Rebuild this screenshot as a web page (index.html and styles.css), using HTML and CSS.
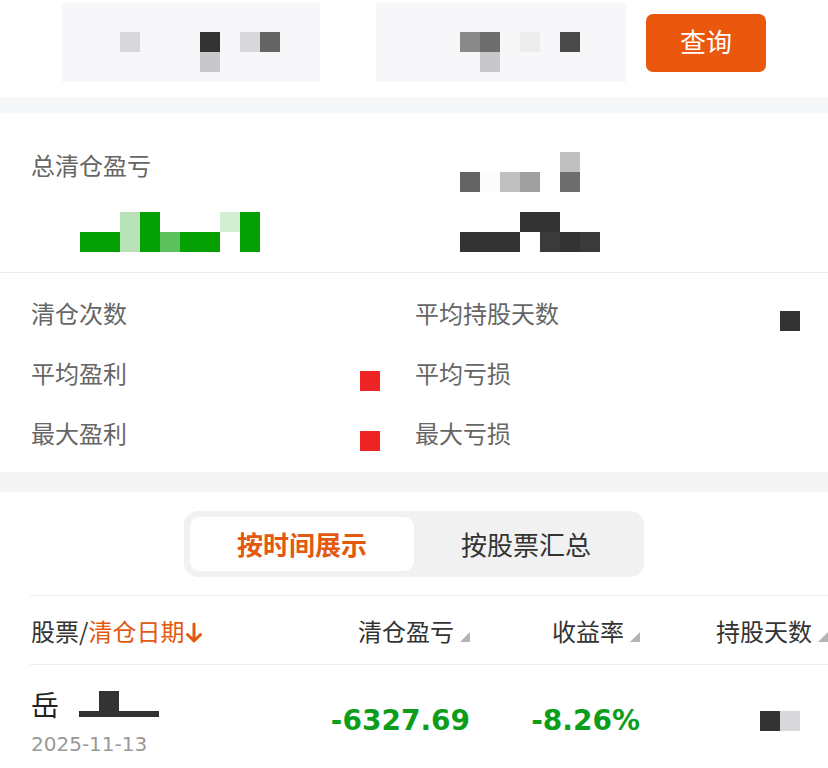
FILE: index.html
```html
<!DOCTYPE html>
<html lang="zh-CN">
<head>
    <meta charset="UTF-8">
    <meta name="viewport" content="width=device-width, initial-scale=1.0">
    <title>清仓盈亏</title>
    <link rel="stylesheet" href="styles.css">
</head>
<body>

    <!-- Search bar: date range + query -->
    <div class="search-bar">
        <div class="field field-start">
            <div class="mosaic">
                <div class="mrow"><span class="px px-grayD"></span><span class="px"></span><span class="px"></span><span class="px"></span><span class="px px-ink"></span><span class="px"></span><span class="px px-grayD"></span><span class="px px-gray6"></span></div>
                <div class="mrow"><span class="px"></span><span class="px"></span><span class="px"></span><span class="px"></span><span class="px px-grayC"></span></div>
            </div>
        </div>
        <div class="field field-end">
            <div class="mosaic">
                <div class="mrow"><span class="px px-gray8"></span><span class="px px-gray7"></span><span class="px"></span><span class="px px-grayE"></span><span class="px"></span><span class="px px-slate"></span></div>
                <div class="mrow"><span class="px"></span><span class="px px-grayC"></span></div>
            </div>
        </div>
        <button class="query-btn">查询</button>
    </div>

    <div class="band"></div>

    <!-- Summary -->
    <section class="summary">
        <div class="total">
            <div class="total-left">
                <div class="total-label">总清仓盈亏</div>
                <div class="mosaic total-value">
                    <div class="mrow"><span class="px"></span><span class="px"></span><span class="px px-green-light"></span><span class="px px-green"></span><span class="px"></span><span class="px"></span><span class="px"></span><span class="px px-green-pale"></span><span class="px px-green"></span></div>
                    <div class="mrow"><span class="px px-green"></span><span class="px px-green"></span><span class="px px-green-light"></span><span class="px px-green"></span><span class="px px-green-mid"></span><span class="px px-green"></span><span class="px px-green"></span><span class="px"></span><span class="px px-green"></span></div>
                </div>
            </div>
            <div class="total-right">
                <div class="mosaic">
                    <div class="mrow"><span class="px"></span><span class="px"></span><span class="px"></span><span class="px"></span><span class="px"></span><span class="px px-grayB"></span></div>
                    <div class="mrow"><span class="px px-gray6"></span><span class="px px-white"></span><span class="px px-grayB"></span><span class="px px-grayA"></span><span class="px"></span><span class="px px-gray7"></span></div>
                    <div class="mrow"></div>
                    <div class="mrow"><span class="px"></span><span class="px"></span><span class="px"></span><span class="px px-ink"></span><span class="px px-ink"></span></div>
                    <div class="mrow"><span class="px px-ink"></span><span class="px px-ink"></span><span class="px px-ink"></span><span class="px"></span><span class="px px-ink2"></span><span class="px px-ink"></span><span class="px px-ink2"></span></div>
                </div>
            </div>
        </div>

        <div class="stats">
            <div class="stat"><span class="stat-label">清仓次数</span></div>
            <div class="stat"><span class="stat-label">平均持股天数</span><span class="px px-ink stat-value"></span></div>
            <div class="stat"><span class="stat-label">平均盈利</span><span class="px px-red stat-value"></span></div>
            <div class="stat"><span class="stat-label">平均亏损</span></div>
            <div class="stat"><span class="stat-label">最大盈利</span><span class="px px-red stat-value"></span></div>
            <div class="stat"><span class="stat-label">最大亏损</span></div>
        </div>
    </section>

    <div class="band band-lg"></div>

    <!-- Records -->
    <section class="records">
        <div class="tabs">
            <div class="tab active">按时间展示</div>
            <div class="tab">按股票汇总</div>
        </div>

        <div class="table">
            <div class="row thead">
                <div class="cell">股票/<span class="accent">清仓日期</span><svg class="sort-arrow" width="16" height="22" viewBox="0 0 16 22"><path d="M8 2 V19 M1.5 12.5 L8 19 L14.5 12.5" fill="none" stroke="#e2590f" stroke-width="3" stroke-linecap="round" stroke-linejoin="round"/></svg></div>
                <div class="cell num">清仓盈亏<svg class="sort-tri" width="10" height="10" viewBox="0 0 10 10"><polygon points="10,0 10,10 0,10" fill="#b4b4b4"/></svg></div>
                <div class="cell num">收益率<svg class="sort-tri" width="10" height="10" viewBox="0 0 10 10"><polygon points="10,0 10,10 0,10" fill="#b4b4b4"/></svg></div>
                <div class="cell days">持股天数<svg class="sort-tri" width="10" height="10" viewBox="0 0 10 10"><polygon points="10,0 10,10 0,10" fill="#b4b4b4"/></svg></div>
            </div>

            <div class="row trow">
                <div class="cell">
                    <div class="stock-name">岳<span class="redact"><span class="redact-block"></span><span class="redact-bar"></span></span></div>
                    <div class="stock-date">2025-11-13</div>
                </div>
                <div class="cell num value loss">-6327.69</div>
                <div class="cell num value loss">-8.26%</div>
                <div class="cell days">
                    <div class="mrow day-value"><span class="px px-ink"></span><span class="px px-grayD"></span></div>
                </div>
            </div>
        </div>
    </section>

</body>
</html>
```

FILE: styles.css
```css
body {
    font-family: "Noto Sans CJK SC", sans-serif;
    background-color: #fff;
    color: #333;
    margin: 0;
    padding: 0;
    overflow-x: hidden;
}

/* pixel mosaic pieces */
.mosaic {
    display: flex;
    flex-direction: column;
}
.mrow {
    display: flex;
    height: 20px;
}
.px {
    display: inline-block;
    width: 20px;
    height: 20px;
    flex-shrink: 0;
}
.px-ink { background-color: #333; }
.px-ink2 { background-color: #3a3a3a; }
.px-slate { background-color: #4a4a4a; }
.px-gray6 { background-color: #646464; }
.px-gray7 { background-color: #6e6e6e; }
.px-gray8 { background-color: #8a8a8a; }
.px-grayA { background-color: #a0a0a0; }
.px-grayB { background-color: #c0c0c0; }
.px-grayC { background-color: #c8c8ca; }
.px-grayD { background-color: #d8d8da; }
.px-grayE { background-color: #ececec; }
.px-white { background-color: #fcfcfc; }
.px-green { background-color: #04a004; }
.px-green-mid { background-color: #5cc05c; }
.px-green-light { background-color: #b8e3b8; }
.px-green-pale { background-color: #d4eed4; }
.px-red { background-color: #ee2424; }

/* search bar */
.search-bar {
    display: flex;
    align-items: flex-start;
    height: 97px;
    padding: 3px 0 0 62px;
    box-sizing: border-box;
}
.field {
    height: 79px;
    background-color: #f7f7f9;
    padding-top: 29px;
    box-sizing: border-box;
}
.field-start {
    width: 258px;
    padding-left: 58px;
}
.field-end {
    width: 250px;
    margin-left: 56px;
    padding-left: 84px;
}
.query-btn {
    margin: 11px 0 0 20px;
    width: 120px;
    height: 58px;
    border: none;
    border-radius: 7px;
    background-color: #e9580c;
    color: #fff;
    font-family: "Noto Sans CJK SC", sans-serif;
    font-size: 26px;
    line-height: 54px;
    padding: 0 0 4px;
    cursor: pointer;
}

.band {
    height: 16px;
    background-color: #f6f7f9;
}
.band-lg {
    height: 20px;
    background-color: #f5f5f5;
}

/* summary */
.total {
    display: flex;
    height: 160px;
    padding-top: 35px;
    box-sizing: border-box;
    border-bottom: 1px solid #ececec;
}
.total-left {
    width: 460px;
    padding-left: 31px;
    box-sizing: border-box;
}
.total-label {
    font-size: 24px;
    line-height: 34px;
    color: #666;
}
.total-value {
    margin: 30px 0 0 49px;
}
.total-right {
    margin-top: 4px;
}

.stats {
    display: grid;
    grid-template-columns: 349px 385px;
    grid-auto-rows: 60px;
    column-gap: 35px;
    padding: 9px 28px 10px 31px;
}
.stat {
    display: flex;
    align-items: center;
    justify-content: space-between;
}
.stat-label {
    font-size: 24px;
    color: #666;
}
.stat-value {
    margin-top: 18px;
}

/* records */
.records {
    padding-top: 19px;
    overflow: hidden;
}
.tabs {
    display: flex;
    width: 460px;
    height: 66px;
    margin: 0 auto;
    padding: 6px;
    box-sizing: border-box;
    background-color: #f1f1f1;
    border-radius: 14px;
}
.tab {
    flex: 1;
    text-align: center;
    font-size: 26px;
    line-height: 54px;
    color: #333;
}
.tab.active {
    background-color: #fff;
    border-radius: 10px;
    color: #e2590f;
    font-weight: bold;
}

.table {
    margin: 18px 0 0 30px;
    border-top: 1px solid #eee;
}
.row {
    display: grid;
    grid-template-columns: 300px 140px 170px 200px;
}
.thead {
    height: 68px;
    align-items: center;
    border-bottom: 1px solid #eee;
    font-size: 24px;
    color: #333;
}
.thead .cell {
    padding-left: 1px;
}
.accent {
    color: #e2590f;
}
.sort-arrow {
    vertical-align: -3px;
    margin-left: 2px;
}
.sort-tri {
    margin-left: 6px;
    vertical-align: -1px;
}
.num {
    text-align: right;
}
.thead .days {
    padding-left: 76px;
}

.trow {
    align-items: start;
    height: 102px;
}
.trow .cell:first-child {
    padding: 22px 0 0 1px;
}
.stock-name {
    display: flex;
    align-items: flex-start;
    font-size: 28px;
    line-height: 34px;
    color: #222;
}
.redact {
    display: flex;
    flex-direction: column;
    margin: 4px 0 0 20px;
}
.redact-block {
    width: 20px;
    height: 20px;
    margin-left: 20px;
    background-color: #333;
}
.redact-bar {
    width: 80px;
    height: 6px;
    background-color: #333;
}
.stock-date {
    margin-top: 10px;
    font-family: "DejaVu Sans", sans-serif;
    font-size: 20px;
    line-height: 26px;
    color: #999;
}
.value {
    padding-top: 36px;
    font-family: "DejaVu Sans", sans-serif;
    font-weight: bold;
    font-size: 28px;
    line-height: 40px;
}
.loss {
    color: #0c9e1a;
}
.day-value {
    margin: 46px 0 0 120px;
}
```
